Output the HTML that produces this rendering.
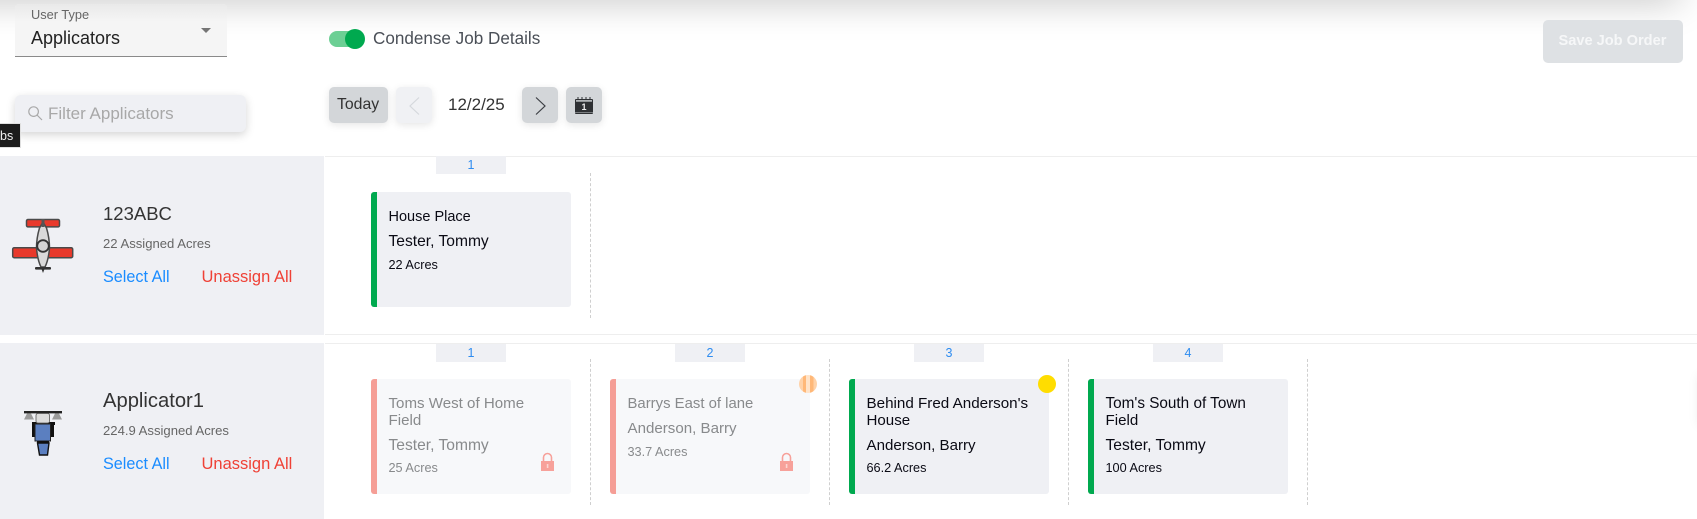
<!DOCTYPE html>
<html><head><meta charset="utf-8">
<style>
html,body{margin:0;padding:0;width:1697px;height:519px;overflow:hidden;background:#fff;font-family:"Liberation Sans",sans-serif;}
div,span{position:absolute;box-sizing:border-box;}
.t{white-space:nowrap;line-height:20px;height:20px;}
.btn{border-radius:5px;box-shadow:0 2px 8px rgba(0,0,0,.10);}
.panel{left:0;width:324px;background:#eff0f4;}
.line{left:325px;right:0;height:1px;background:#eeeeee;}
.tab{width:70px;height:18px;background:#eff0f4;color:#2e8cf0;font-size:12.5px;line-height:18px;text-align:center;}
.dash{width:0;border-left:1px dashed #cfcfcf;}
.card{width:200px;height:115px;background:#eff0f4;border-radius:3px;overflow:hidden;}
.bar{left:0;top:0;bottom:0;width:6px;background:#00a94f;}
.off{background:#f7f8fa;}
.off .bar{background:#f59e96;}
.n{left:17.5px;font-size:15.1px;color:#0a0a14;}
.p{font-size:15.6px;}
.a{left:17.5px;font-size:12.7px;color:#0a0a14;}
.off .n,.off .a{color:#888a8c;}
.name{left:103px;color:#333;}
.sub{left:103px;font-size:13.1px;color:#666;}
.sel{left:103px;font-size:16.2px;color:#1a8cff;}
.un{left:201.5px;font-size:16.5px;color:#ef4136;}
svg{position:absolute;overflow:visible;}
</style></head><body>

<div style="left:-60px;right:17px;top:-30px;height:30px;box-shadow:0 0 38px rgba(0,0,0,.26);background:#ddd;"></div>

<div style="left:15px;top:4px;width:212px;height:53px;background:#f5f5f5;border-bottom:1px solid #8a8a8a;border-radius:4px 4px 0 0;"></div>
<div style="left:15px;top:4px;width:212px;height:18px;background:linear-gradient(#e9e9e9,rgba(245,245,245,0));border-radius:4px 4px 0 0;"></div>
<span class="t" style="left:31px;top:5px;font-size:12.8px;color:#666;">User Type</span>
<span class="t" style="left:31px;top:28px;font-size:18px;color:#222;">Applicators</span>
<svg style="left:201px;top:28px" width="10" height="5"><path d="M0 0H10L5 5Z" fill="#757575"/></svg>

<div style="left:329px;top:31px;width:32px;height:16px;border-radius:8px;background:#6ccf94;"></div>
<div style="left:345px;top:29px;width:20px;height:20px;border-radius:50%;background:#00a94f;"></div>
<span class="t" style="left:373px;top:29px;font-size:17.1px;color:#4a4f57;">Condense Job Details</span>

<div style="left:1543px;top:20px;width:140px;height:43px;background:#dee1e4;border-radius:5px;"></div>
<span class="t" style="left:1558.5px;top:31px;font-size:14.6px;font-weight:bold;color:#f6f7f8;">Save Job Order</span>

<div style="left:15px;top:95px;width:231px;height:37px;background:#eff0f4;border-radius:6px;box-shadow:0 3px 9px rgba(0,0,0,.17);"></div>
<svg style="left:28px;top:106px" width="15" height="15" fill="none" stroke="#a9a9a9" stroke-width="1.2"><circle cx="5.6" cy="5.6" r="4.8"/><path d="M9 9L14 14"/></svg>
<span class="t" style="left:48px;top:104px;font-size:17px;color:#a8a8a8;">Filter Applicators</span>

<div style="left:0;top:123px;width:21px;height:25px;background:#1c1c1c;border:1px solid #e0e0e0;border-left:0;"></div>
<span class="t" style="left:0;top:126px;font-size:12.5px;color:#f0f0f0;">bs</span>

<div class="btn" style="left:329px;top:87px;width:59px;height:36px;background:#d3d6d9;"></div>
<span class="t" style="left:337px;top:95px;font-size:15.8px;color:#333;">Today</span>
<div class="btn" style="left:396px;top:87px;width:36px;height:36px;background:#f0f1f4;"></div>
<svg style="left:409px;top:97px" width="11" height="18" fill="none" stroke="#d5d8dc" stroke-width="1.2"><path d="M10 0.5L1 9L10 17.5"/></svg>
<span class="t" style="left:448px;top:95px;font-size:17px;color:#333;">12/2/25</span>
<div class="btn" style="left:522px;top:87px;width:36px;height:36px;background:#d3d6d9;"></div>
<svg style="left:535px;top:97px" width="11" height="18" fill="none" stroke="#3c3f44" stroke-width="1.2"><path d="M1 0.5L10 9L1 17.5"/></svg>
<div class="btn" style="left:566px;top:87px;width:36px;height:36px;background:#d3d6d9;"></div>
<svg style="left:575px;top:97px" width="18" height="17"><path d="M1 2H17Q18 2 18 3V16Q18 17 17 17H1Q0 17 0 16V3Q0 2 1 2Z" fill="#2e3033"/><rect x="1" y="3.2" width="16" height="1.4" fill="#d3d6d9"/><path d="M3 0V2M7 0V2M11 0V2M15 0V2" stroke="#2e3033" stroke-width="1"/><rect x="0" y="15" width="18" height=".8" fill="#8d9094"/><text x="9" y="13" font-family="Liberation Sans" font-size="9" font-weight="bold" fill="#eee" text-anchor="middle">1</text></svg>

<!-- row 1 -->
<div class="line" style="top:156px"></div>
<div class="line" style="top:334px"></div>
<div class="line" style="top:343px"></div>
<div class="panel" style="top:156px;height:179px"></div>
<svg style="left:12px;top:218px" width="62" height="56">
 <rect x="14.5" y="1.5" width="33" height="7.4" rx="1.5" fill="#e8392b" stroke="#4a4a4a" stroke-width="1.5"/>
 <rect x="0.7" y="29.7" width="60" height="10" rx="1.5" fill="#e8392b" stroke="#4a4a4a" stroke-width="1.5"/>
 <path d="M31 4L34.5 10Q37.5 20 37.5 30Q36.5 42 33 49H29Q25.5 42 24.5 30Q24.5 20 27.5 10Z" fill="#d9d9d9" stroke="#4a4a4a" stroke-width="1.5"/>
 <rect x="29.5" y="1" width="3" height="8" fill="#555"/>
 <circle cx="31" cy="28" r="5.8" fill="#d4d4d4" stroke="#333" stroke-width="1.8"/>
 <rect x="23" y="49" width="16" height="2.6" rx="1" fill="#333"/>
 <path d="M29.5 51H32.5L31 55Z" fill="#333"/>
</svg>
<span class="t name" style="top:204px;font-size:18.5px;">123ABC</span>
<span class="t sub" style="top:234px;">22 Assigned Acres</span>
<span class="t sel" style="top:267px;">Select All</span>
<span class="t un" style="top:267px;">Unassign All</span>

<div class="tab" style="left:436px;top:156px">1</div>
<div class="dash" style="left:590px;top:173px;height:145px"></div>
<div class="card" style="left:371px;top:192px"><div class="bar"></div>
 <span class="t n" style="top:15px;font-size:14.5px">House Place</span>
 <span class="t n p" style="top:40px">Tester, Tommy</span>
 <span class="t a" style="top:63px">22 Acres</span>
</div>

<!-- row 2 -->
<div class="panel" style="top:343px;height:176px"></div>
<svg style="left:23px;top:410px" width="40" height="46">
 <rect x="1" y="1" width="38" height="2.4" fill="#222"/>
 <path d="M4 3.5H8L11 9.5H1Z" fill="#9a9a9a"/><path d="M32 3.5H36L39 9.5H29Z" fill="#9a9a9a"/>
 <rect x="9" y="12" width="23" height="3" fill="#111"/>
 <rect x="13" y="3.5" width="13.5" height="9.5" rx="2" fill="#dcdcdc" stroke="#555" stroke-width=".8"/>
 <rect x="9" y="12" width="4" height="15" fill="#111"/>
 <rect x="27" y="12" width="4" height="15" fill="#111"/>
 <rect x="12" y="14" width="15.5" height="17" fill="#5b7fc0" stroke="#222" stroke-width="1"/>
 <rect x="14" y="31" width="12" height="2" fill="#111"/>
 <path d="M14.5 33H26L24.5 45H16.5Z" fill="#5b7fc0" stroke="#111" stroke-width="1.4"/>
</svg>
<span class="t name" style="top:391px;font-size:20.2px;">Applicator1</span>
<span class="t sub" style="top:421px;">224.9 Assigned Acres</span>
<span class="t sel" style="top:454px;">Select All</span>
<span class="t un" style="top:454px;">Unassign All</span>

<div class="tab" style="left:436px;top:344px">1</div>
<div class="tab" style="left:675px;top:344px">2</div>
<div class="tab" style="left:914px;top:344px">3</div>
<div class="tab" style="left:1153px;top:344px">4</div>
<div class="dash" style="left:590px;top:359px;height:146px"></div>
<div class="dash" style="left:829px;top:359px;height:146px"></div>
<div class="dash" style="left:1068px;top:359px;height:146px"></div>
<div class="dash" style="left:1307px;top:359px;height:146px"></div>

<div class="card off" style="left:371px;top:379px"><div class="bar"></div>
 <span class="t n" style="top:15px">Toms West of Home</span>
 <span class="t n" style="top:32px">Field</span>
 <span class="t n p" style="top:57px">Tester, Tommy</span>
 <span class="t a" style="top:79px">25 Acres</span>
 <svg style="left:170px;top:74px" width="13" height="18"><path d="M2.5 9V4.5A4 4 0 0 1 10.5 4.5V9" fill="none" stroke="#f7a19a" stroke-width="1.6"/><path d="M0 8H13V18H0Z" fill="#f7a19a"/><rect x="5.8" y="11" width="1.6" height="4" fill="#fbd6d2"/></svg>
</div>

<div class="card off" style="left:610px;top:379px"><div class="bar"></div>
 <span class="t n" style="top:15px;font-size:14.9px">Barrys East of lane</span>
 <span class="t n" style="top:40px">Anderson, Barry</span>
 <span class="t a" style="top:63px">33.7 Acres</span>
 <svg style="left:170px;top:74px" width="13" height="18"><path d="M2.5 9V4.5A4 4 0 0 1 10.5 4.5V9" fill="none" stroke="#f7a19a" stroke-width="1.6"/><path d="M0 8H13V18H0Z" fill="#f7a19a"/><rect x="5.8" y="11" width="1.6" height="4" fill="#fbd6d2"/></svg>
</div>
<div style="left:799px;top:375px;width:18px;height:18px;border-radius:50%;background:linear-gradient(90deg,#ffd2a8 0,#ffd2a8 22%,#ffb878 22%,#ffb878 40%,#ffe3c8 40%,#ffe3c8 62%,#ffb878 62%,#ffb878 80%,#ffd2a8 80%);"></div>

<div class="card" style="left:849px;top:379px"><div class="bar"></div>
 <span class="t n" style="top:15px;font-size:15.2px">Behind Fred Anderson's</span>
 <span class="t n" style="top:32px">House</span>
 <span class="t n" style="top:57px;font-size:15.1px">Anderson, Barry</span>
 <span class="t a" style="top:79px">66.2 Acres</span>
</div>
<div style="left:1038px;top:375px;width:18px;height:18px;border-radius:50%;background:#ffdd00;"></div>

<div class="card" style="left:1088px;top:379px"><div class="bar"></div>
 <span class="t n" style="top:15px;font-size:15.3px">Tom's South of Town</span>
 <span class="t n" style="top:32px">Field</span>
 <span class="t n p" style="top:57px">Tester, Tommy</span>
 <span class="t a" style="top:79px">100 Acres</span>
</div>

<div style="left:1700px;top:375px;width:10px;height:50px;box-shadow:0 0 12px rgba(0,0,0,.10);background:#eee;"></div>
</body></html>
